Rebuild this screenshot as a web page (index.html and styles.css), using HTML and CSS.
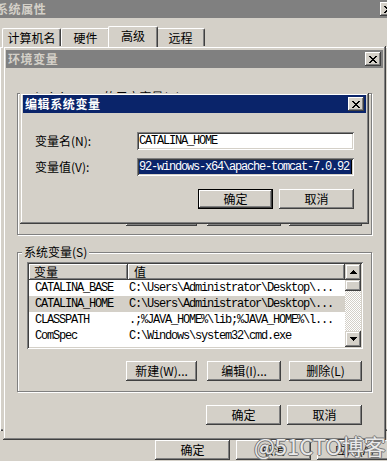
FILE: index.html
```html
<!DOCTYPE html>
<html lang="zh-CN">
<head>
    <meta charset="UTF-8">
    <title>环境变量</title>
    <link rel="stylesheet" href="styles.css">
</head>
<body>
    <!-- 系统属性 (behind) -->
    <div class="window sysprops">
        <div class="titlebar">
            <span class="title">系统属性</span>
            <span class="close-btn"><svg width="8" height="7" viewBox="0 0 8 7" shape-rendering="crispEdges"><path d="M0 0h2v1H0zM6 0h2v1H6zM1 1h2v1H1zM5 1h2v1H5zM2 2h4v1H2zM3 3h2v1H3zM2 4h4v1H2zM1 5h2v1H1zM5 5h2v1H5zM0 6h2v1H0zM6 6h2v1H6z"/></svg></span>
        </div>
        <div class="tabs">
            <div class="tab tab-first">计算机名</div>
            <div class="tab tab-second">硬件</div>
            <div class="tab selected">高级</div>
            <div class="tab tab-second">远程</div>
        </div>
        <div class="tab-page"></div>
        <div class="button-row sys-buttons">
            <button class="btn">确定</button>
            <button class="btn">取消</button>
            <button class="btn">应用(A)</button>
        </div>
    </div>

    <!-- 环境变量 -->
    <div class="window envvars">
        <div class="titlebar">
            <span class="title">环境变量</span>
            <span class="close-btn"><svg width="8" height="7" viewBox="0 0 8 7" shape-rendering="crispEdges"><path d="M0 0h2v1H0zM6 0h2v1H6zM1 1h2v1H1zM5 1h2v1H5zM2 2h4v1H2zM3 3h2v1H3zM2 4h4v1H2zM1 5h2v1H1zM5 5h2v1H5zM0 6h2v1H0zM6 6h2v1H6z"/></svg></span>
        </div>
        <div class="env-body">
            <div class="group group-user">
                <div class="group-label">Administrator 的用户变量(U)</div>
                <div class="listview listview-user"></div>
                <div class="button-row group-buttons">
                    <button class="btn btn-new">新建(N)...</button>
                    <button class="btn btn-edit">编辑(E)...</button>
                    <button class="btn btn-del">删除(D)</button>
                </div>
            </div>

            <div class="group group-system">
                <div class="group-label">系统变量(S)</div>
                <div class="listview">
                    <div class="list-main">
                        <div class="list-head">
                            <div class="col-head col-name">变量</div>
                            <div class="col-head col-value">值</div>
                        </div>
                        <div class="row">
                            <span class="cell-name">CATALINA_BASE</span>
                            <span class="cell-value">C:\Users\Administrator\Desktop\...</span>
                        </div>
                        <div class="row row-selected">
                            <span class="cell-name">CATALINA_HOME</span>
                            <span class="cell-value">C:\Users\Administrator\Desktop\...</span>
                        </div>
                        <div class="row">
                            <span class="cell-name">CLASSPATH</span>
                            <span class="cell-value">.;%JAVA_HOME%\lib;%JAVA_HOME%\l...</span>
                        </div>
                        <div class="row">
                            <span class="cell-name">ComSpec</span>
                            <span class="cell-value">C:\Windows\system32\cmd.exe</span>
                        </div>
                    </div>
                    <div class="scrollbar">
                        <div class="scroll-btn"><svg width="7" height="4" viewBox="0 0 7 4" shape-rendering="crispEdges"><path d="M3 0h1v1h1v1h1v1h1v1H0V3h1V2h1V1h1z"/></svg></div>
                        <div class="scroll-thumb"></div>
                        <div class="scroll-track"></div>
                        <div class="scroll-btn"><svg width="7" height="4" viewBox="0 0 7 4" shape-rendering="crispEdges"><path d="M0 0h7v1H6v1H5v1H4v1H3V3H2V2H1V1H0z"/></svg></div>
                    </div>
                </div>
                <div class="button-row group-buttons">
                    <button class="btn btn-new">新建(W)...</button>
                    <button class="btn btn-edit">编辑(I)...</button>
                    <button class="btn btn-del">删除(L)</button>
                </div>
            </div>

            <div class="button-row env-buttons">
                <button class="btn">确定</button>
                <button class="btn">取消</button>
            </div>
        </div>
    </div>

    <!-- 编辑系统变量 -->
    <div class="window editvar">
        <div class="titlebar active">
            <span class="title">编辑系统变量</span>
            <span class="close-btn"><svg width="8" height="7" viewBox="0 0 8 7" shape-rendering="crispEdges"><path d="M0 0h2v1H0zM6 0h2v1H6zM1 1h2v1H1zM5 1h2v1H5zM2 2h4v1H2zM3 3h2v1H3zM2 4h4v1H2zM1 5h2v1H1zM5 5h2v1H5zM0 6h2v1H0zM6 6h2v1H6z"/></svg></span>
        </div>
        <div class="edit-body">
            <div class="field">
                <span class="field-label">变量名(N):</span>
                <div class="textbox">CATALINA_HOME</div>
            </div>
            <div class="field">
                <span class="field-label">变量值(V):</span>
                <div class="textbox"><span class="selection">92-windows-x64\apache-tomcat-7.0.92</span></div>
            </div>
            <div class="button-row edit-buttons">
                <button class="btn default">确定</button>
                <button class="btn">取消</button>
            </div>
        </div>
    </div>

    <div class="watermark">@51CTO博客</div>
</body>
</html>
```

FILE: styles.css
```css
* {
    margin: 0;
    padding: 0;
    box-sizing: border-box;
}

body {
    position: relative;
    width: 387px;
    height: 461px;
    overflow: hidden;
    background-color: #d4d0c8;
    font-family: "Noto Sans CJK SC", "Noto Sans", sans-serif;
    font-size: 12px;
    color: #000;
}

/* windows */
.window {
    position: absolute;
    background-color: #d4d0c8;
    box-shadow: inset -1px -1px #404040, inset 1px 1px #d4d0c8,
                inset -2px -2px #808080, inset 2px 2px #fff;
}

.sysprops {
    left: -10px;
    top: -4px;
    width: 412px;
    height: 470px;
    padding: 4px;
}

.envvars {
    left: 3px;
    top: 46px;
    width: 383px;
    height: 394px;
    padding: 4px 3px 3px;
}

.editvar {
    left: 20px;
    top: 93px;
    width: 349px;
    height: 131px;
    padding: 2px 3px;
}

.titlebar {
    display: flex;
    align-items: center;
    justify-content: space-between;
    height: 18px;
    padding: 0 2px;
    background-color: #808080;
    color: #d4d0c8;
    font-weight: bold;
    letter-spacing: 0.6px;
    line-height: 18px;
}

.titlebar.active {
    background-color: #0a246a;
    color: #fff;
}

.close-btn {
    display: flex;
    align-items: center;
    justify-content: center;
    width: 16px;
    height: 14px;
    background-color: #d4d0c8;
    box-shadow: inset -1px -1px #404040, inset 1px 1px #fff, inset -2px -2px #808080;
}

/* tabs of 系统属性 */
.tabs {
    display: flex;
    align-items: flex-end;
    height: 21px;
    margin-top: 8px;
    padding-left: 8px;
}

.tab {
    width: 49px;
    height: 19px;
    padding-top: 1px;
    line-height: 16px;
    text-align: center;
    border-top: 1px solid #fff;
    border-left: 1px solid #fff;
    border-right: 1px solid #404040;
    border-radius: 2px 2px 0 0;
    box-shadow: inset -1px 0 #808080;
}

.tab-first {
    width: 59px;
}

.tab.selected {
    position: relative;
    z-index: 1;
    width: 50px;
    height: 21px;
    margin: 0 -2px;
    background-color: #d4d0c8;
}

.tab-page {
    height: 384px;
    margin-left: 6px;
    box-shadow: inset 1px 1px #fff, inset -1px -1px #404040, inset -2px -2px #808080;
}

/* buttons */
.button-row {
    display: flex;
    justify-content: flex-end;
}

.btn {
    width: 75px;
    height: 20px;
    border: none;
    background-color: #d4d0c8;
    font-family: "Noto Sans CJK SC", "Noto Sans", sans-serif;
    font-size: 12px;
    line-height: 18px;
    color: #000;
    text-align: center;
    box-shadow: inset -1px -1px #404040, inset 1px 1px #fff,
                inset -2px -2px #808080, inset 2px 2px #d4d0c8;
}

.btn.default {
    border: 1px solid #000;
    box-shadow: inset -1px -1px #404040, inset 1px 1px #fff, inset -2px -2px #808080;
}

.sys-buttons {
    gap: 6px;
    margin-top: 9px;
    padding-right: 6px;
}

/* 环境变量 body */
.env-body {
    padding: 0 11px;
}

.group {
    border: 1px solid #808080;
    box-shadow: inset 1px 1px #fff, 1px 1px #fff;
}

.group-user {
    height: 142px;
    margin-top: 25px;
}

.group-system {
    height: 140px;
    margin-top: 17px;
}

.group-label {
    width: fit-content;
    margin: -8px 0 0 4px;
    padding: 0 2px;
    line-height: 14px;
    background-color: #d4d0c8;
}

.group-user .group-label {
    margin-top: -4px;
}

.listview {
    display: flex;
    height: 87px;
    margin: 3px 8px 0 9px;
    padding: 2px;
    background-color: #fff;
    box-shadow: inset 1px 1px #808080, inset -1px -1px #fff,
                inset 2px 2px #404040, inset -2px -2px #d4d0c8;
}

.listview-user {
    height: 87px;
}

.list-main {
    flex: 1;
    overflow: hidden;
}

.list-head {
    display: flex;
    height: 16px;
}

.col-head {
    height: 16px;
    line-height: 15px;
    background-color: #d4d0c8;
    box-shadow: inset -1px -1px #404040, inset 1px 1px #fff, inset -2px -2px #808080;
}

.col-name {
    width: 99px;
    padding-left: 5px;
}

.col-value {
    flex: 1;
    padding-left: 6px;
}

.row {
    display: flex;
    height: 16px;
    line-height: 16px;
    font-family: "Liberation Mono", monospace;
    font-size: 12px;
    letter-spacing: -1.2px;
    white-space: nowrap;
}

.row-selected {
    background-color: #d4d0c8;
}

.cell-name {
    width: 94px;
    padding-left: 6px;
}

.cell-value {
    padding-left: 6px;
}

.scrollbar {
    display: flex;
    flex-direction: column;
    width: 16px;
}

.scroll-btn,
.scroll-thumb {
    display: flex;
    align-items: center;
    justify-content: center;
    height: 16px;
    background-color: #d4d0c8;
    box-shadow: inset -1px -1px #404040, inset 1px 1px #d4d0c8,
                inset -2px -2px #808080, inset 2px 2px #fff;
}

.scroll-thumb {
    height: 11px;
}

.scroll-track {
    flex: 1;
    background: repeating-conic-gradient(#fff 0 25%, #d4d0c8 0 50%) 0 0 / 2px 2px;
}

.group-buttons {
    margin-top: 12px;
    padding-right: 9px;
}

.btn-new {
    width: 71px;
    margin-right: 10px;
}

.btn-edit {
    width: 74px;
    margin-right: 8px;
}

.btn-del {
    width: 73px;
}

.env-buttons {
    gap: 6px;
    margin-top: 13px;
    padding-right: 10px;
}

/* 编辑系统变量 body */
.edit-body {
    padding: 19px 12px 0;
}

.field {
    display: flex;
    align-items: center;
    height: 18px;
}

.field + .field {
    margin-top: 8px;
}

.field-label {
    width: 102px;
    line-height: 18px;
}

.textbox {
    flex: 1;
    height: 18px;
    padding: 2px 2px 0;
    overflow: hidden;
    background-color: #fff;
    font-family: "Liberation Mono", monospace;
    font-size: 12px;
    letter-spacing: -1.2px;
    line-height: 14px;
    white-space: nowrap;
    box-shadow: inset 1px 1px #808080, inset -1px -1px #fff,
                inset 2px 2px #404040, inset -2px -2px #d4d0c8;
}

.selection {
    display: inline-block;
    padding-right: 2px;
    background-color: #0a246a;
    color: #fff;
    border-right: 1px solid #000;
}

.edit-buttons {
    gap: 6px;
    margin-top: 13px;
}

/* watermark over the corner */
.watermark {
    position: absolute;
    left: 254px;
    top: 431px;
    font-family: "Noto Sans CJK SC", "Noto Sans", sans-serif;
    font-size: 22px;
    line-height: 28px;
    color: rgba(255, 255, 255, 0.85);
    text-shadow: 1px 0 #777, -1px 0 #777, 0 1px #777, 0 -1px #777;
    white-space: nowrap;
}
```
